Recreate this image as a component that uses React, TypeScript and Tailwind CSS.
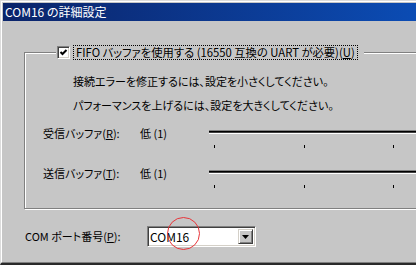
import React from 'react';

const jp = "font-['Noto_Sans_CJK_JP',sans-serif] [font-feature-settings:'palt']";

function Slider() {
  return (
    <div className="flex-1 pt-[4px]">
      <div className="h-[4px] border-t border-b border-t-[#808080] border-b-white bg-black shadow-[inset_0_-1px_0_#404040]" />
      <div className="flex mt-[11px] h-[3px]">
        <div className="w-px h-full bg-black ml-[5px]" />
        <div className="w-px h-full bg-black ml-[89px]" />
        <div className="w-px h-full bg-black ml-[88px]" />
      </div>
    </div>
  );
}

function BufferRow({ label, keyChar }: { label: string; keyChar: string }) {
  return (
    <div className="flex items-start h-[40px]">
      <div className="w-[115px] pl-[18px] leading-[14px] whitespace-nowrap">
        {label}(<span className="underline underline-offset-1">{keyChar}</span>):
      </div>
      <div className="w-[69px] leading-[14px] whitespace-nowrap">低 (1)</div>
      <Slider />
    </div>
  );
}

export default function App() {
  return (
    <div className={`w-[416px] h-[265px] overflow-hidden bg-[#c6c6c6] text-[11px] text-black ${jp}`}>
      <div className="h-full border-t border-l border-b-2 border-t-[#dcdcdc] border-l-[#dcdcdc] border-b-[#2a2a2a]">
        <div className="h-full border-t border-l border-b border-t-white border-l-white border-b-[#808080] pl-px pt-px">
          {/* title bar */}
          <div className="h-[18px] flex items-center pl-[2px] bg-gradient-to-r from-[#0a246a] to-[#0b4cb4] text-white text-[12px] whitespace-nowrap">
            COM16 の詳細設定
          </div>

          {/* FIFO group */}
          <div className="relative ml-[21px] mt-[31px] w-[420px] h-[157px] border border-[#808080] shadow-[inset_1px_1px_0_#fff,1px_1px_0_#fff]">
            <div className="absolute left-[31px] -top-[8px] flex items-center bg-[#c6c6c6] pl-px pr-[6px]">
              <div className="w-[13px] h-[13px] bg-white border border-t-[#808080] border-l-[#808080] border-r-white border-b-white shadow-[inset_1px_1px_0_#404040,inset_-1px_-1px_0_#d4d0c8] flex items-center justify-center">
                <svg width="9" height="9" viewBox="0 0 9 9">
                  <path d="M1.5 4 L3.5 6 L7.5 2" fill="none" stroke="#000" strokeWidth="2" />
                </svg>
              </div>
              <span className="ml-[3px] px-[2px] text-[11.3px] leading-[13px] border border-dotted border-black whitespace-nowrap">
                FIFO バッファを使用する (16550 互換の UART が必要)(<span className="underline underline-offset-1">U</span>)
              </span>
            </div>

            <div className="pl-[48px] pt-[21px] leading-[14px] whitespace-nowrap">
              <p>接続エラーを修正するには、設定を小さくしてください。</p>
              <p className="mt-[10px]">パフォーマンスを上げるには、設定を大きくしてください。</p>
            </div>

            <div className="mt-[14px]">
              <BufferRow label="受信バッファ" keyChar="R" />
              <BufferRow label="送信バッファ" keyChar="T" />
            </div>
          </div>

          {/* port number */}
          <div className="flex items-center ml-[22px] mt-[17px]">
            <div className="w-[122px] whitespace-nowrap">
              COM ポート番号(<span className="underline underline-offset-1">P</span>):
            </div>
            <div className="relative w-[109px] h-[21px] bg-white border border-t-[#808080] border-l-[#808080] border-r-white border-b-white shadow-[inset_1px_1px_0_#404040,inset_-1px_-1px_0_#d4d0c8] flex items-center pl-[2px] pr-[2px]">
              <span className="flex-1 text-[12px] leading-none">COM16</span>
              <div className="w-[15px] h-[15px] bg-[#c6c6c6] border border-t-[#d4d0c8] border-l-[#d4d0c8] border-r-[#404040] border-b-[#404040] shadow-[inset_1px_1px_0_#fff,inset_-1px_-1px_0_#808080] flex items-center justify-center">
                <svg width="7" height="4" viewBox="0 0 7 4">
                  <path d="M0 0 H7 L3.5 4 Z" fill="#000" />
                </svg>
              </div>
              <div className="absolute left-[19px] -top-[10px] w-[33px] h-[33px] rounded-full border-[1.5px] border-[#e8353a]" />
            </div>
          </div>
        </div>
      </div>
    </div>
  );
}
